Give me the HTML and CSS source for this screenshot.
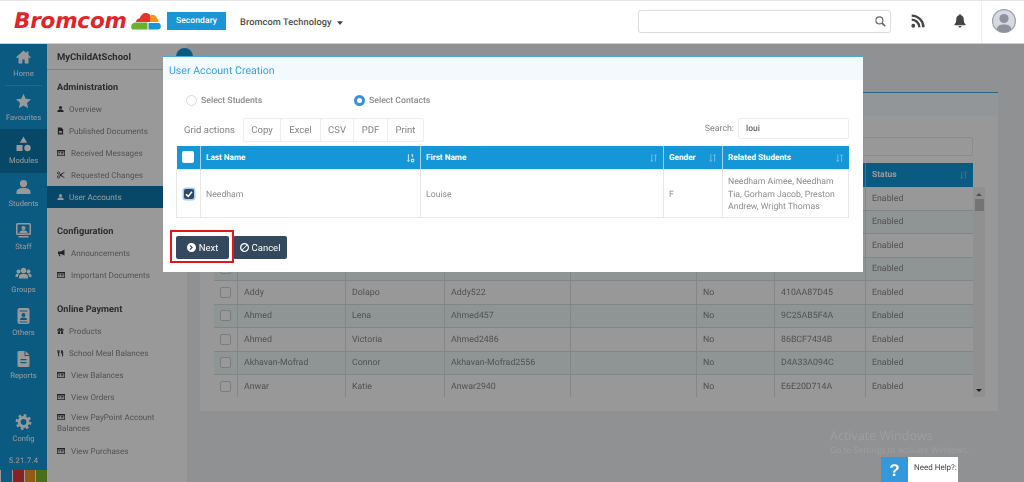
FILE: index.html
```html
<!DOCTYPE html>
<html lang="en">
<head>
<meta charset="utf-8">
<title>User Account Creation</title>
<link rel="stylesheet" href="styles.css">
</head>
<body>
<svg class="sprite" width="0" height="0" aria-hidden="true">
  <symbol id="i-home" viewBox="0 0 16 16"><path d="M8 1.5.6 8.2l1 1L3 8v6.5h3.8v-4h2.4v4H13V8l1.4 1.2 1-1L13 6V2.5h-2v1.7z"/></symbol>
  <symbol id="i-star" viewBox="0 0 16 16"><path d="M8 .8l2.2 4.9 5.3.6-4 3.6 1.1 5.3L8 12.5l-4.6 2.7 1.1-5.3-4-3.6 5.3-.6z"/></symbol>
  <symbol id="i-modules" viewBox="0 0 16 16"><path d="M8 .5l3.6 6.2H4.4zM1 9h6v6H1z"/><circle cx="12" cy="12" r="3.2"/></symbol>
  <symbol id="i-user" viewBox="0 0 16 16"><circle cx="8" cy="4.6" r="3.6"/><path d="M1 15v-1.8C1 10.400 3.500 9 8 9s7 1.400 7 4.200V15z"/></symbol>
  <symbol id="i-staff" viewBox="0 0 16 16"><path fill-rule="evenodd" d="M2 1h12a1.500 1.500 0 0 1 1.500 1.500v9A1.500 1.500 0 0 1 14 13H2a1.500 1.500 0 0 1-1.500-1.500v-9A1.500 1.500 0 0 1 2 1zm0 1.500v9h12v-9z"/><path d="M3 14h10v1.500H3z"/><circle cx="8" cy="6" r="2"/><path d="M4 11c0-2 1.500-2.800 4-2.800s4 .8 4 2.800z"/></symbol>
  <symbol id="i-groups" viewBox="0 0 16 16"><circle cx="8" cy="5.500" r="2.700"/><circle cx="3" cy="6.500" r="2"/><circle cx="13" cy="6.500" r="2"/><path d="M3.500 13.500v-1.800c0-2 1.800-2.900 4.500-2.900s4.500.9 4.500 2.900v1.800zM0 12v-1.500C0 9.300 1 8.800 2.800 8.800c.3 0 .6 0 .8.100-.8.600-1.100 1.500-1.100 2.800V12zM16 12v-1.500c0-1.200-1-1.700-2.800-1.700-.3 0-.6 0-.8.100.8.600 1.100 1.500 1.100 2.800V12z"/></symbol>
  <symbol id="i-badge" viewBox="0 0 16 16"><path fill-rule="evenodd" d="M4 0h8a2 2 0 0 1 2 2v12a2 2 0 0 1-2 2H4a2 2 0 0 1-2-2V2a2 2 0 0 1 2-2zm.2 2.500v1h7.600v-1zM8 5a2 2 0 1 0 0 4 2 2 0 0 0 0-4zM4.500 12h7c0-1.600-1.500-2.400-3.500-2.400S4.500 10.400 4.500 12zm-.3 1.500v1h7.600v-1z"/></symbol>
  <symbol id="i-report" viewBox="0 0 16 16"><path fill-rule="evenodd" d="M3 0h6v4.500a.5.500 0 0 0 .5.500H14v9.500a1.500 1.500 0 0 1-1.500 1.500h-9A1.500 1.500 0 0 1 2 14.500v-13A1.500 1.500 0 0 1 3 0zm2 8v1.300h6V8zm0 3v1.300h6V11z"/><path d="M10 0l4 4h-4z"/></symbol>
  <symbol id="i-cog" viewBox="0 0 16 16"><circle cx="8" cy="8" r="4.400" fill="none" stroke="currentColor" stroke-width="3"/><circle cx="8" cy="8" r="6.600" fill="none" stroke="currentColor" stroke-width="2.600" stroke-dasharray="2.600 2.580"/></symbol>
  <symbol id="i-file" viewBox="0 0 16 16"><path fill-rule="evenodd" d="M2 0h8l4 4v12H2zm3 8v2h6V8zm0 3v2h6v-2z"/></symbol>
  <symbol id="i-table" viewBox="0 0 16 16"><path fill-rule="evenodd" d="M0 2h16v12H0zm1.500 3v7.500h13V5zm1.500 1h3v1.500H3zm4.500 0H13v1.500H7.500zM3 9h3v1.500H3zm4.500 0H13v1.500H7.500z"/></symbol>
  <symbol id="i-scissors" viewBox="0 0 16 16"><path d="M6 6.500 15 2v1.200L8.500 8 15 12.800V14L6 9.500 5 9v-2z"/><circle cx="3" cy="4" r="2.200" fill="none" stroke="currentColor" stroke-width="1.500"/><circle cx="3" cy="12" r="2.200" fill="none" stroke="currentColor" stroke-width="1.500"/></symbol>
  <symbol id="i-horn" viewBox="0 0 16 16"><path d="M15 1v12L8 10H2V5h6zM3 10.500h3l1 4H4.500z"/></symbol>
  <symbol id="i-gift" viewBox="0 0 16 16"><path d="M1 4h14v3.500H1zM2 8.500h5V15H2zM9 8.500h5V15H9z"/><circle cx="5.500" cy="3" r="2"/><circle cx="10.500" cy="3" r="2"/></symbol>
  <symbol id="i-meal" viewBox="0 0 16 16"><path d="M1 1h1.300v4H3V1h1.300v4H5V1h1.300v5.500L5 8v7.500H2.500V8L1 6.500zM10 1c2.500 0 4 2 4 6v8.500h-2.500V9H9.500V4c0-2 0-3 .5-3z"/></symbol>
  <symbol id="i-caret" viewBox="0 0 8 5"><path d="M0 0h8L4 5z"/></symbol>
  <symbol id="i-next" viewBox="0 0 16 16"><path fill-rule="evenodd" d="M8 0a8 8 0 1 1 0 16A8 8 0 0 1 8 0zM6 3.500 4.500 5l3 3-3 3L6 12.500 10.500 8z"/></symbol>
  <symbol id="i-ban" viewBox="0 0 16 16"><path fill-rule="evenodd" d="M8 0a8 8 0 1 1 0 16A8 8 0 0 1 8 0zm0 2.300a5.700 5.700 0 0 0-4.500 9.100l8-8A5.700 5.700 0 0 0 8 2.300zm4.500 2.300-8 8a5.700 5.700 0 0 0 8-8z"/></symbol>
  <symbol id="i-sort" viewBox="0 0 12 12"><path d="M3 1v8H1.500L3.800 11.500 6 9H4.500V1zM8 11V3H6.500L8.800.5 11 3H9.500v8z"/></symbol>
  <symbol id="i-sorted" viewBox="0 0 12 12"><path d="M2.500 1v8H1l2.200 2.500L5.500 9H4V1zM7 1h2.500v4H8V2.500H7zM6.500 7h4.500v4.500H6.500zM8 8.500v1.500h1.500V8.500z"/></symbol>
</svg>

<header class="topbar">
  <div class="brand">
    <span class="logo-word">Bromcom</span>
    <svg class="logo-cloud" viewBox="0 0 30 18" aria-hidden="true">
      <path fill="#e5332a" d="M5 10c0-2 1.500-3.500 3.500-3.500C10 3 12 1 14.500 1c2 0 3.500 .6 4.500 2v7H5z"/>
      <path fill="#f39321" d="M19 3.500c.8-.6 1.500-.8 2.500-.8 2.500 0 4 1.600 4.500 3.800 1 .4 1.500 1.300 1.700 3.500H19z"/>
      <path fill="#68b22e" d="M1 17.500c-1.300-1.500-1.200-4 .2-5.500 1-1 2.400-1.500 3.800-1.500H16.500v7z"/>
      <path fill="#1a96d6" d="M17.500 11H28c1.500 1 2 2.500 1.800 4-.2 1.500-1.200 2.500-2.800 2.500h-9.500z"/>
    </svg>
  </div>
  <span class="phase">Secondary</span>
  <span class="school">Bromcom Technology</span>
  <svg class="caret" aria-hidden="true"><use href="#i-caret"/></svg>
  <div class="search">
    <svg class="search-icon" viewBox="0 0 12 12" aria-hidden="true"><circle cx="4.800" cy="4.800" r="3.800" fill="none" stroke="currentColor" stroke-width="1.200"/><path d="M7.500 7.500 11 11" stroke="currentColor" stroke-width="1.800"/></svg>
  </div>
  <svg class="rss" viewBox="0 0 16 16" aria-hidden="true"><circle cx="2.600" cy="13.400" r="2.200" fill="currentColor"/><path d="M.8 6.500a8.700 8.700 0 0 1 8.700 8.700M.8 1.800a13.400 13.400 0 0 1 13.400 13.400" fill="none" stroke="currentColor" stroke-width="2.700"/></svg>
  <svg class="bell" viewBox="0 0 16 18" aria-hidden="true"><path fill="currentColor" d="M8 0c.8 0 1.300.5 1.300 1.300 2.500.6 3.700 2.600 3.700 5.200 0 3.500.8 5.300 2.500 7v1H.5v-1C2.200 11.800 3 10 3 6.500c0-2.600 1.200-4.600 3.700-5.200C6.700.5 7.200 0 8 0zM6 15.500h4a2 2 0 0 1-4 0z"/></svg>
  <div class="account">
    <svg class="avatar" viewBox="0 0 24 24" aria-hidden="true"><circle cx="12" cy="12" r="11.400" fill="#d6d9e2" stroke="#9b9ea6" stroke-width="1.200"/><circle cx="12" cy="9.500" r="4.600" fill="#8f929c"/><path fill="#8f929c" d="M4.500 20.500c.6-3.800 3.600-5 7.500-5s6.900 1.200 7.500 5a11 11 0 0 1-15 0z"/></svg>
  </div>
</header>

<div class="app">
  <nav class="rail">
    <a class="rail-item rail-home"><svg class="rail-icon"><use href="#i-home"/></svg><span>Home</span></a>
    <a class="rail-item"><svg class="rail-icon"><use href="#i-star"/></svg><span>Favourites</span></a>
    <a class="rail-item rail-active"><svg class="rail-icon"><use href="#i-modules"/></svg><span>Modules</span></a>
    <a class="rail-item"><svg class="rail-icon"><use href="#i-user"/></svg><span>Students</span></a>
    <a class="rail-item"><svg class="rail-icon"><use href="#i-staff"/></svg><span>Staff</span></a>
    <a class="rail-item"><svg class="rail-icon"><use href="#i-groups"/></svg><span>Groups</span></a>
    <a class="rail-item"><svg class="rail-icon"><use href="#i-badge"/></svg><span>Others</span></a>
    <a class="rail-item"><svg class="rail-icon"><use href="#i-report"/></svg><span>Reports</span></a>
    <a class="rail-item rail-config"><svg class="rail-icon"><use href="#i-cog"/></svg><span>Config</span></a>
    <div class="version">5.21.7.4</div>
    <div class="swatches"><i class="sw sw-blue"></i><i class="sw sw-red"></i><i class="sw sw-orange"></i><i class="sw sw-green"></i></div>
  </nav>

  <aside class="menu">
    <div class="menu-title">MyChildAtSchool</div>
    <h3 class="menu-head">Administration</h3>
    <a class="menu-item"><svg class="mi"><use href="#i-user"/></svg>Overview</a>
    <a class="menu-item"><svg class="mi"><use href="#i-file"/></svg>Published Documents</a>
    <a class="menu-item"><svg class="mi mi-w"><use href="#i-table"/></svg>Received Messages</a>
    <a class="menu-item"><svg class="mi mi-w"><use href="#i-scissors"/></svg>Requested Changes</a>
    <a class="menu-item menu-active"><svg class="mi"><use href="#i-user"/></svg>User Accounts</a>
    <h3 class="menu-head menu-head-b">Configuration</h3>
    <a class="menu-item"><svg class="mi mi-w"><use href="#i-horn"/></svg>Announcements</a>
    <a class="menu-item"><svg class="mi mi-w"><use href="#i-table"/></svg>Important Documents</a>
    <h3 class="menu-head menu-head-b">Online Payment</h3>
    <a class="menu-item"><svg class="mi"><use href="#i-gift"/></svg>Products</a>
    <a class="menu-item"><svg class="mi"><use href="#i-meal"/></svg>School Meal Balances</a>
    <a class="menu-item"><svg class="mi mi-w"><use href="#i-table"/></svg>View Balances</a>
    <a class="menu-item"><svg class="mi mi-w"><use href="#i-table"/></svg>View Orders</a>
    <a class="menu-wrap"><svg class="mi mi-w mi-inline"><use href="#i-table"/></svg>View PayPoint Account Balances</a>
    <a class="menu-item"><svg class="mi mi-w"><use href="#i-table"/></svg>View Purchases</a>
  </aside>

  <main class="main">
    <section class="panel">
      <div class="panel-head"></div>
      <div class="panel-body">
        <div class="filter"></div>
        <div class="grid-head">
          <div></div><div></div><div></div><div></div><div></div><div></div><div></div>
          <div class="gh-status">Status<svg class="sort"><use href="#i-sort"/></svg></div>
        </div>
        <div class="grid-wrap">
          <div class="grid-rows">
            <div class="row"><div class="c0"><i class="box"></i></div><div></div><div></div><div></div><div></div><div></div><div></div><div>Enabled</div></div>
            <div class="row"><div class="c0"><i class="box"></i></div><div></div><div></div><div></div><div></div><div></div><div></div><div>Enabled</div></div>
            <div class="row"><div class="c0"><i class="box"></i></div><div></div><div></div><div></div><div></div><div></div><div></div><div>Enabled</div></div>
            <div class="row"><div class="c0"><i class="box"></i></div><div></div><div></div><div></div><div></div><div></div><div></div><div>Enabled</div></div>
            <div class="row"><div class="c0"><i class="box"></i></div><div>Addy</div><div>Dolapo</div><div>Addy522</div><div></div><div>No</div><div>410AA87D45</div><div>Enabled</div></div>
            <div class="row"><div class="c0"><i class="box"></i></div><div>Ahmed</div><div>Lena</div><div>Ahmed457</div><div></div><div>No</div><div>9C25AB5F4A</div><div>Enabled</div></div>
            <div class="row"><div class="c0"><i class="box"></i></div><div>Ahmed</div><div>Victoria</div><div>Ahmed2486</div><div></div><div>No</div><div>86BCF7434B</div><div>Enabled</div></div>
            <div class="row"><div class="c0"><i class="box"></i></div><div>Akhavan-Mofrad</div><div>Connor</div><div>Akhavan-Mofrad2556</div><div></div><div>No</div><div>D4A33A094C</div><div>Enabled</div></div>
            <div class="row"><div class="c0"><i class="box"></i></div><div>Anwar</div><div>Katie</div><div>Anwar2940</div><div></div><div>No</div><div>E6E20D714A</div><div>Enabled</div></div>
          </div>
          <div class="scrollbar">
            <i class="arrow-up"></i>
            <i class="thumb"></i>
            <i class="arrow-down"></i>
          </div>
        </div>
      </div>
    </section>
  </main>
</div>

<div class="toggle"></div>
<div class="backdrop"></div>

<section class="modal">
  <h2 class="modal-title">User Account Creation</h2>
  <div class="modal-body">
    <div class="radios">
      <label class="radio"><i class="dot"></i>Select Students</label>
      <label class="radio radio-on"><i class="dot"></i>Select Contacts</label>
    </div>
    <div class="toolbar">
      <span class="grid-label">Grid actions</span>
      <div class="btn-group">
        <span class="tb tb-copy">Copy</span><span class="tb tb-excel">Excel</span><span class="tb tb-csv">CSV</span><span class="tb tb-pdf">PDF</span><span class="tb tb-print">Print</span>
      </div>
      <div class="tb-search"><span>Search:</span><div class="tb-input">loui</div></div>
    </div>
    <table class="picker">
      <thead>
        <tr>
          <th class="p0"><i class="head-box"></i></th>
          <th class="p1">Last Name<svg class="sort sort-on"><use href="#i-sorted"/></svg></th>
          <th class="p2">First Name<svg class="sort"><use href="#i-sort"/></svg></th>
          <th class="p3">Gender<svg class="sort"><use href="#i-sort"/></svg></th>
          <th class="p4">Related Students<svg class="sort"><use href="#i-sort"/></svg></th>
        </tr>
      </thead>
      <tbody>
        <tr>
          <td class="p0"><i class="checked"><svg viewBox="0 0 10 10" aria-hidden="true"><path d="M2 5.200 4.200 7.400 8 2.800" fill="none" stroke="#fff" stroke-width="1.600"/></svg></i></td>
          <td>Needham</td>
          <td>Louise</td>
          <td>F</td>
          <td>Needham Aimee, Needham Tia, Gorham Jacob, Preston Andrew, Wright Thomas</td>
        </tr>
      </tbody>
    </table>
    <div class="actions">
      <button class="btn btn-next"><svg class="btn-icon"><use href="#i-next"/></svg>Next</button>
      <button class="btn btn-cancel"><svg class="btn-icon"><use href="#i-ban"/></svg>Cancel</button>
    </div>
  </div>
</section>

<div class="highlight"></div>

<div class="watermark">
  <div class="wm-a">Activate Windows</div>
  <div class="wm-b">Go to Settings to activate Windows.</div>
</div>

<aside class="help"><span class="help-q">?</span><span class="help-t">Need Help?:</span></aside>
</body>
</html>
```
FILE: styles.css
```css
* { box-sizing: border-box; }
html, body { margin: 0; padding: 0; }
body {
  width: 1024px;
  height: 482px;
  overflow: hidden;
  position: relative;
  font-family: Roboto, "Liberation Sans", sans-serif;
  text-rendering: geometricPrecision;
  background: #fff;
  color: #777;
  filter: blur(.45px);
}
.sprite { position: absolute; }
svg { display: block; fill: currentColor; }

/* top bar */
.topbar {
  height: 44px;
  display: flex;
  align-items: center;
  border-top: 1px solid #e4e4e4;
  border-bottom: 1px solid #cfcfcf;
  background: #fff;
}
.topbar > * { flex: none; }
.brand { display: flex; align-items: center; width: 167px; padding-left: 14px; }
.logo-word {
  font: italic 700 21.500px/1 "DejaVu Sans", sans-serif;
  letter-spacing: -.2px;
  color: #e3232b;
}
.logo-cloud { width: 30px; height: 18px; margin-left: 4px; margin-top: -2px; }
.phase {
  width: 59px; height: 18px;
  background: #1a96d6; color: #fff;
  font-size: 8.500px; font-weight: 500; letter-spacing: .1px;
  text-align: center; line-height: 18px;
  margin-top: -2px;
}
.school { margin-left: 14px; width: 93px; white-space: nowrap; font-size: 9.200px; font-weight: 500; color: #4a4a4a; letter-spacing: .1px; }
.caret { width: 6px; height: 4px; margin-left: 4px; color: #444; margin-top: 1px; }
.search {
  margin-left: 295px;
  width: 253px; height: 23px;
  border: 1px solid #ddd; border-radius: 3px;
  display: flex; align-items: center; justify-content: flex-end;
  padding-right: 4px;
  margin-top: -2px;
  box-shadow: 0 0 1px #ddd;
}
.search-icon { width: 11px; height: 11px; color: #666; }
.rss { width: 14px; height: 14px; margin-left: 20px; color: #444; margin-top: -2px; }
.bell { width: 12px; height: 14px; margin-left: 29px; color: #444; margin-top: -2px; }
.account { margin-left: 15px; width: 43px; height: 100%; border-left: 1px solid #eee; display: flex; align-items: center; padding-left: 10px; }
.avatar { width: 24px; height: 24px; margin-top: -2px; }

/* app shell */
.app { display: flex; height: 438px; }
.rail {
  width: 47px; flex: none;
  background: #1297d9;
  display: flex; flex-direction: column;
  color: #fff;
}
.rail-item {
  height: 43px; flex: none;
  display: flex; flex-direction: column; align-items: center;
  padding-top: 6px;
  font-size: 7.600px;
}
.rail-item span { margin-top: 3px; line-height: 11px; }
.rail-icon { width: 17px; height: 16px; }
.rail-home { position: relative; padding-top: 5px; }
.rail-home::after { content: ""; position: absolute; left: 5px; right: 5px; bottom: 1px; height: 1px; background: rgba(255,255,255,.2); }
.rail-active { background: #0d78ad; height: 44px; margin-top: -1px; padding-top: 7px; }
.rail-config { margin-top: 20px; }
.version { margin-top: 4px; text-align: center; font-size: 7.600px; letter-spacing: .3px; line-height: 11px; }
.swatches { margin-top: auto; height: 12px; display: flex; gap: 1px; padding-left: 1px; background: #fff; }
.sw { flex: 1; height: 12px; }
.sw-blue { background: #1a96d6; }
.sw-red { background: #e03a3a; }
.sw-orange { background: #f0961f; }
.sw-green { background: #7fb82f; }

/* side menu */
.menu {
  width: 140px; flex: none;
  background: #fff;
  font-size: 8.100px;
  color: #8a8a8a;
}
.menu-title {
  height: 26px; line-height: 27px;
  padding-left: 10px;
  border-bottom: 1px solid #d5d5d5;
  font-size: 9.500px; font-weight: 700; color: #4a4a4a;
}
.menu-head { margin: 6px 0 0; padding: 1px 0 0 10px; font-size: 9.200px; font-weight: 700; color: #4a4a4a; height: 22px; line-height: 22px; }
.menu-head-b { margin-top: 12px; }
.menu-item { display: flex; align-items: center; height: 22px; padding: 0 0 0 10px; }
.menu-active { background: #0d78ad; color: #fff; }
.mi { width: 7px; height: 8px; margin-right: 5px; flex: none; color: #3a3a3a; }
.mi-w { width: 8px; margin-right: 6px; }
.menu-active .mi { color: #fff; }
.menu-wrap { display: block; height: 32px; line-height: 11px; padding: 4px 4px 0 10px; }
.mi-inline { display: inline-block; vertical-align: -1px; }

/* page behind the dialog */
.main { flex: 1; background: #f0f2f3; padding: 48px 26px 0 13px; }
.panel { height: 319px; border-top: 1px solid #4aa8de; background: #fff; }
.panel-head { height: 23px; background: #f3fafe; }
.panel-body { padding: 21px 0 0 14px; background: #fdfdfd; height: 295px; }
.filter { width: 759px; height: 19px; border: 1px solid #eaeaea; border-radius: 2px; }
.grid-head, .row {
  display: grid;
  grid-template-columns: 24px 108px 99px 126px 126px 78px 91px 107px;
  width: 759px;
}
.grid-head { height: 24px; margin-top: 7px; background: #1297d9; color: #fff; font-size: 8.500px; font-weight: 700; }
.grid-head > div { border-right: 1px solid rgba(255,255,255,.4); }
.gh-status { display: flex; align-items: center; justify-content: space-between; padding: 0 5px 0 6px; border-right: 0 !important; }
.grid-wrap { display: flex; height: 210px; overflow: hidden; }
.grid-rows { width: 759px; }
.row { height: 23.500px; font-size: 8.800px; color: #888; border-bottom: 1px solid #d8dede; }
.row:nth-child(even) { background: #eef9f8; }
.row > div { display: flex; align-items: center; padding: 1px 0 0 6px; border-right: 1px solid #dee2e2; }
.row > div:last-child { border-right: 0; }
.c0 { justify-content: center; padding: 0 !important; }
.box { width: 11px; height: 11px; border: 1px solid #ccd0d0; border-radius: 2px; background: #fff; }
.scrollbar { width: 12px; background: #f1f1f1; display: flex; flex-direction: column; align-items: center; }
.arrow-up { margin-top: 6px; border: 3px solid transparent; border-top: 0; border-bottom: 3px solid #888; }
.thumb { margin-top: 3px; width: 9px; height: 12px; background: #c1c1c1; }
.arrow-down { margin-top: auto; margin-bottom: 5px; border: 3px solid transparent; border-bottom: 0; border-top: 3px solid #333; }

/* overlays */
.toggle { position: absolute; left: 176px; top: 48px; width: 17px; height: 17px; border-radius: 50%; background: #1297d9; }
.backdrop { position: absolute; left: 0; right: 0; top: 44px; bottom: 0; background: rgba(0,0,0,.4); }

.modal {
  position: absolute; left: 163px; top: 56px;
  width: 700px; height: 216px;
  background: #fff;
  border-top: 1px solid #4aa8de;
}
.modal-title {
  margin: 0; height: 23px; padding-left: 6px;
  background: #f3fafe;
  color: #3a9fdf;
  font-size: 10.600px; font-weight: 400; line-height: 28px;
}
.modal-body { padding: 0 14px 0 13px; }
.radios { display: flex; height: 38px; align-items: center; padding-left: 10px; padding-top: 3px; }
.radio { display: flex; align-items: center; width: 168px; font-size: 8.700px; font-weight: 500; color: #8a8a8a; }
.dot { width: 11px; height: 11px; border-radius: 50%; border: 1px solid #d9d9d9; margin-right: 4px; }
.radio-on .dot { border: 3px solid #3a8fd6; }
.toolbar { display: flex; height: 24px; align-items: center; padding-left: 8px; }
.grid-label { width: 59px; font-size: 9.500px; color: #808080; padding-top: 1px; }
.btn-group { display: flex; height: 24px; border: 1px solid #eee; border-radius: 2px; }
.tb { display: flex; align-items: center; justify-content: center; font-size: 9.500px; color: #808080; border-right: 1px solid #eee; padding-top: 1px; }
.tb:last-child { border-right: 0; }
.tb-copy { width: 37px; } .tb-excel { width: 40px; } .tb-csv { width: 33px; } .tb-pdf { width: 34px; } .tb-print { width: 35px; }
.tb-search { margin-left: auto; display: flex; align-items: center; font-size: 8.800px; color: #808080; margin-top: -3px; gap: 4px; }
.tb-input { width: 111px; height: 21px; border: 1px solid #eee; border-radius: 2px; padding-left: 7px; line-height: 21px; font-size: 8.500px; font-weight: 500; color: #666; }

.picker { width: 673px; margin-top: 4px; border-collapse: collapse; table-layout: fixed; font-size: 8.700px; }
.picker th {
  position: relative; height: 23px;
  background: #1596d6; color: #fff;
  font-weight: 700; text-align: left;
  padding: 1px 0 0 5px; font-size: 8.200px;
  border-right: 1px solid #9fd3ef;
}
.picker th:last-child { border-right: 0; }
.picker td { height: 48.500px; padding: 3px 5px 0; color: #8c8c8c; border: 1px solid #e7e7e7; line-height: 12.500px; }
.p0 { width: 24px; padding: 0 !important; }
.p1 { width: 220px; }
.p2 { width: 243px; }
.p3 { width: 59px; }
.head-box { display: block; margin: 0 auto; width: 12px; height: 12px; border-radius: 2px; background: #fff; }
.checked { display: block; margin: 1px auto 0; width: 10px; height: 10px; border-radius: 2px; background: #2c4a68; box-shadow: 0 0 0 1.500px #a8cbe8; }
.sort { position: absolute; right: 5px; top: 7px; width: 9px; height: 10px; color: rgba(255,255,255,.35); }
.sort-on { color: rgba(255,255,255,.7); }
.gh-status .sort { position: static; width: 9px; height: 10px; }

.actions { display: flex; gap: 4px; margin-top: 18px; }
.btn {
  display: flex; align-items: center; justify-content: center; gap: 3px;
  height: 23px; border: 0; border-radius: 2px;
  background: #34495e; color: #fff;
  font: 400 9.500px Roboto, sans-serif;
  padding: 0;
}
.btn-next { width: 53px; }
.btn-cancel { width: 54px; }
.btn-icon { width: 9px; height: 9px; }

.highlight { position: absolute; left: 170px; top: 230px; width: 64px; height: 33px; border: 2px solid #e8141c; }

.watermark { position: absolute; left: 830px; top: 428px; color: rgba(255,255,255,.12); font-family: "Open Sans", sans-serif; }
.wm-a { font-size: 12.500px; line-height: 15px; }
.wm-b { font-size: 8.500px; line-height: 12px; margin-top: 2px; white-space: nowrap; }

.help { position: absolute; left: 881px; top: 457px; width: 77px; height: 25px; display: flex; background: #fff; overflow: hidden; }
.help-q { width: 27px; background: #3498db; color: #fff; text-align: center; font: 700 17px/28px "Liberation Sans", sans-serif; }
.help-t { margin-left: 6px; font-size: 8px; line-height: 21px; color: #444; white-space: nowrap; }
```
